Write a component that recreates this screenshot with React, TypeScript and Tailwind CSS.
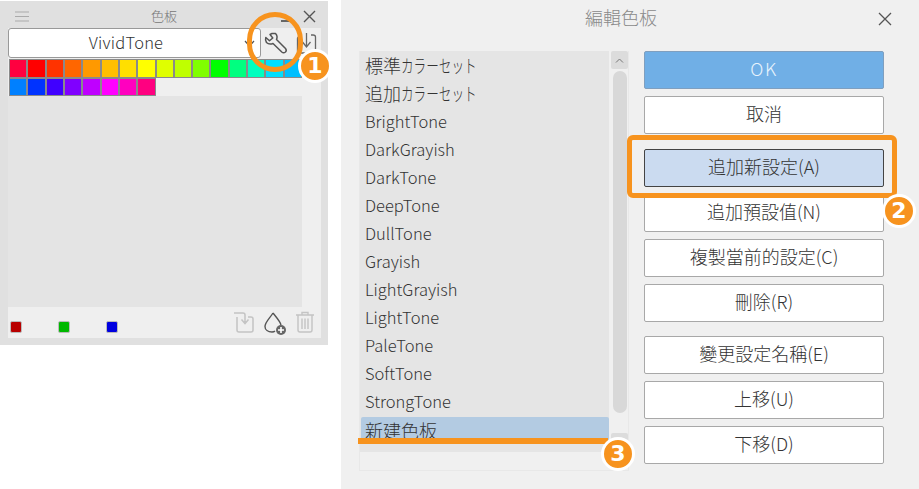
import React from "react";

const row1 = ["#ff0040","#ff0000","#ff3300","#ff6600","#ff9900","#ffbf00","#ffdf00","#ffff00","#dfff00","#bfff00","#80ff00","#00ff00","#00ff80","#00ffbf","#00dfff","#00bfff"];
const row2 = ["#0080ff","#0033ff","#4000ff","#8000ff","#bf00ff","#ff00ff","#ff00bf","#ff0080"];
const tones = ["BrightTone","DarkGrayish","DarkTone","DeepTone","DullTone","Grayish","LightGrayish","LightTone","PaleTone","SoftTone","StrongTone"];

function Badge({ n }: { n: string }) {
  return (
    <div className="flex h-[34px] w-[34px] items-center justify-center rounded-full border-[3px] border-white bg-[#f7931e] font-['DejaVu_Sans',sans-serif] text-[22px] font-bold leading-none text-white">
      {n}
    </div>
  );
}

function Btn({ label, className = "" }: { label: string; className?: string }) {
  return (
    <div className={`flex h-[38px] w-[240px] items-center justify-center rounded-[2px] border border-[#a8a8a8] bg-white pb-[3px] text-[18px] text-[#333] ${className}`}>
      {label}
    </div>
  );
}

function KanaRow({ kanji }: { kanji: string }) {
  return (
    <div className="flex h-[28px] items-center pl-[5px] text-[18px] text-[#333]">
      {kanji}
      <span className="inline-block w-[75px] origin-left scale-x-[0.7] whitespace-nowrap">カラーセット</span>
    </div>
  );
}

function Wrench() {
  return (
    <svg width="24" height="24" viewBox="0 0 24 24" fill="none" stroke="#555" strokeWidth="1.5" strokeLinejoin="round" strokeLinecap="round">
      <path d="M8 2.5 L11.5 2.5 Q14 5 12.5 8.5 L21.5 17.5 Q23 19.5 21.5 21 Q19.5 22.5 17.8 21 L9 12.5 Q5 14 2.5 11.5 Q1 9 1.8 6.5 L5.5 9.8 L8.8 7 L6 3.5 Z" />
    </svg>
  );
}

export default function App() {
  return (
    <div className="relative flex h-[489px] w-[919px] overflow-hidden bg-white font-['Noto_Sans_CJK_JP',sans-serif] font-light">
      {/* Palette panel */}
      <div className="mt-px h-[344px] w-[328px] shrink-0 bg-[#e0e0e0]">
        <div className="relative flex h-[27px] items-center justify-center pt-[2px] text-[13px] text-[#777]">
          <svg className="absolute left-[15px] top-[10px]" width="14" height="11" viewBox="0 0 14 11" stroke="#aaa" strokeWidth="1.2"><path d="M0 1H14M0 5.5H14M0 10H14" /></svg>
          色板
          <div className="absolute left-[281px] top-[19px] h-[2px] w-[9px] bg-[#666]" />
          <svg className="absolute left-[303px] top-[9px]" width="13" height="13" viewBox="0 0 13 13" stroke="#555" strokeWidth="1.4"><path d="M1 1L12 12M12 1L1 12" /></svg>
        </div>
        <div className="ml-[8px] flex h-[310px] w-[313px] flex-col bg-[#efefef]">
          <div className="flex h-[31px] shrink-0">
            <div className="relative flex h-[30px] w-[253px] shrink-0 items-center justify-center rounded-[3px] border border-[#999] bg-white pb-[1px] pr-[17px] text-[16.5px] tracking-[0.2px] text-[#333]">
              VividTone
              <svg className="absolute left-[235px] top-[11px]" width="11" height="7" viewBox="0 0 11 7" fill="none" stroke="#555" strokeWidth="1.2"><path d="M1 1L5.5 6L10 1" /></svg>
            </div>
            <div className="ml-[3px] mt-[3px] shrink-0"><Wrench /></div>
            <svg className="ml-[8px] mt-[3px] shrink-0" width="21" height="24" viewBox="0 0 21 24" fill="none" stroke="#666" strokeWidth="1.3"><path d="M6 6H3Q1.5 6 1.5 7.5V20Q1.5 22 3 22H17Q19.5 22 19.5 20V6Q19.5 4 17 4H15M10.5 2V15M6.5 11L10.5 16L14.5 11" /></svg>
          </div>
          <div className="flex flex-1">
            <div className="flex w-[294px] flex-col">
              <div className="h-[37px] pl-px">
                <div className="grid h-[37px] w-[293px] grid-cols-16">
                  {[...row1, ...row2].map((c, i) => (
                    <div key={i} className="border border-[#8a8a8a]" style={{ background: c }} />
                  ))}
                </div>
              </div>
              <div className="h-[211px] bg-[#e4e4e4]" />
            </div>
          </div>
          <div className="flex h-[31px] items-start pl-[2px] pt-[14px]">
            {["#b80000", "#00b800", "#0000e0"].map((c) => (
              <div key={c} className="mr-[36px] box-content h-[10px] w-[10px] rounded-[2px] border border-[#bbb]" style={{ background: c }} />
            ))}
            <div className="ml-auto mr-[6px] -mt-[14px] flex items-start gap-[8px] pt-[4px]">
              <svg width="22" height="22" viewBox="0 0 22 22" fill="none" stroke="#c4c4c4" strokeWidth="1.5"><path d="M1 2H10Q12 2 12 4V12M8.5 8.5L12 12.5L15.5 8.5M15 6H18Q20 6 20 8V19Q20 21 18 21H6Q4 21 4 19V6" /></svg>
              <svg width="24" height="24" viewBox="0 0 24 24" fill="none" stroke="#555" strokeWidth="1.4"><path d="M10 2C7 7 2 11 2 15.5C2 19 5 21 9 21C10 21 11 21 12 20M10 2C13 6 17 10 18 14" /><circle cx="18" cy="19" r="5" fill="#666" stroke="none" /><path d="M18 16V22M15 19H21" stroke="#fff" strokeWidth="1.6" /></svg>
              <svg width="20" height="22" viewBox="0 0 20 22" fill="none" stroke="#c4c4c4" strokeWidth="1.4"><path d="M1 4H19M7 4V1.5H13V4M3 4V19Q3 21 5 21H15Q17 21 17 19V4M7 7.5V18M10 7.5V18M13 7.5V18" /></svg>
            </div>
          </div>
        </div>
      </div>

      {/* Dialog */}
      <div className="ml-[13px] flex h-[489px] w-[578px] flex-col bg-[#f0f0f0]">
        <div className="relative flex h-[36px] shrink-0 items-center justify-center pb-[1px] pr-[18px] text-[18px] text-[#8a8a8a]">
          編輯色板
          <svg className="absolute right-[27px] top-[12px]" width="14" height="14" viewBox="0 0 14 14" stroke="#555" strokeWidth="1.3"><path d="M1 1L13 13M13 1L1 13" /></svg>
        </div>
        <div className="flex pl-[18px] pt-[15px]">
          {/* List */}
          <div className="flex h-[420px] w-[270px] border border-l-[#e8e8e8] border-r-[#e8e8e8] border-b-[#e8e8e8] border-t-0">
            <div className="h-[401px] w-[250px] overflow-hidden bg-[#e5e5e5]">
              <KanaRow kanji="標準" />
              <KanaRow kanji="追加" />
              {tones.map((t) => (
                <div key={t} className="flex h-[28px] items-center pl-[5px] text-[16.5px] text-[#333]">{t}</div>
              ))}
              <div className="ml-px mt-[2px] flex h-[27px] w-[248px] items-center rounded-[2px] bg-[#b3cbe2] pb-[1px] pl-[4px] text-[18px] text-[#333]">新建色板</div>
              <div className="flex h-[28px] items-center pl-[5px] text-[16.5px] text-[#333]">VividTone</div>
            </div>
            <div className="ml-[2px] flex w-[17px] flex-col">
              <div className="flex h-[18px] items-center justify-center rounded-[2px] bg-[#dcdcdc]">
                <svg width="9" height="5" viewBox="0 0 9 5" fill="none" stroke="#777"><path d="M1 4.5L4.5 1L8 4.5" /></svg>
              </div>
              <div className="ml-[2px] mt-[2px] h-[342px] w-[14px] rounded-[7px] bg-[#d8d8d8]" />
              <div className="mt-[20px] h-[18px] rounded-[2px] bg-[#dcdcdc]" />
            </div>
          </div>
          {/* Buttons */}
          <div className="ml-[15px] flex flex-col">
            <div className="flex h-[38px] w-[240px] items-center justify-center rounded-[2px] border border-[#7f9fbf] bg-[#70afe6] pb-[3px] text-[18px] tracking-[1.5px] text-[#e8f3fc]">OK</div>
            <Btn label="取消" className="mt-[7px]" />
            <Btn label="追加新設定(A)" className="mt-[15px] !border-[#444] !bg-[#cbdbf0]" />
            <Btn label="追加預設值(N)" className="mt-[7px]" />
            <Btn label="複製當前的設定(C)" className="mt-[7px]" />
            <Btn label="刪除(R)" className="mt-[7px]" />
            <Btn label="變更設定名稱(E)" className="mt-[14px]" />
            <Btn label="上移(U)" className="mt-[7px]" />
            <Btn label="下移(D)" className="mt-[7px]" />
          </div>
        </div>
      </div>

      {/* Annotations */}
      <div className="absolute left-[247px] top-[12px] h-[60px] w-[56px] rounded-full border-[5px] border-[#f7931e]" />
      <div className="absolute left-[298px] top-[49px]"><Badge n="1" /></div>
      <div className="absolute left-[627px] top-[135px] h-[63px] w-[270px] rounded-[6px] border-[5px] border-[#f7931e]" />
      <div className="absolute left-[882px] top-[194px]"><Badge n="2" /></div>
      <div className="absolute left-[358px] top-[438px] h-[6px] w-[250px] bg-[#f7931e]" />
      <div className="absolute left-[601px] top-[437px]"><Badge n="3" /></div>
    </div>
  );
}
